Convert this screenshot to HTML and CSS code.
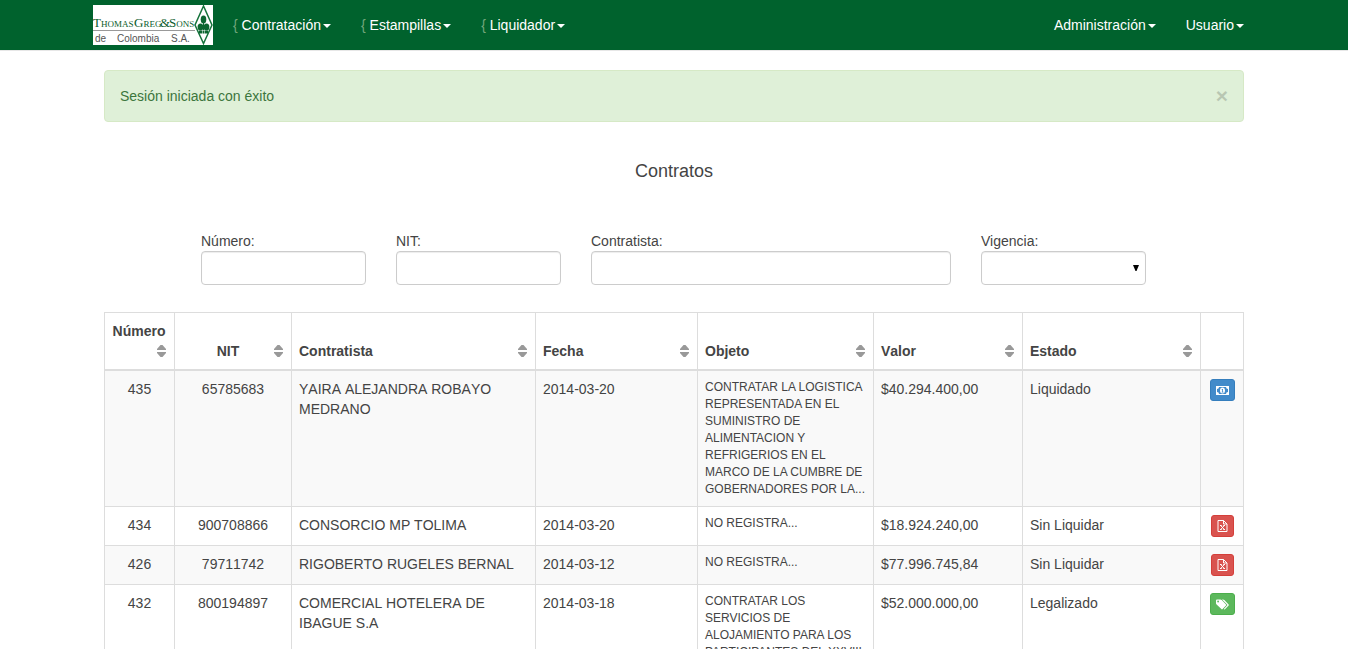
FILE: index.html
```html
<!DOCTYPE html>
<html lang="es">
<head>
<meta charset="utf-8">
<title>Contratos</title>
<meta name="viewport" content="width=device-width, initial-scale=1">
<link rel="stylesheet" href="styles.css">
</head>
<body>
<svg class="sprite" aria-hidden="true">
  <symbol id="sort" viewBox="0 0 9 12"><path d="M0 5V4L3.500 0h2L9 4v1zM0 7h9v1l-3.500 4h-2L0 8z"/></symbol>
  <symbol id="money" viewBox="0 0 13 9"><path fill-rule="evenodd" d="M0 0h13v9H0zM3 1Q3 3 1 3v3q2 0 2 2h7q0-2 2-2V3q-2 0-2-2z"/><path fill-rule="evenodd" d="M6.500 1.500c1.700 0 2.500 1.300 2.500 3s-.8 3-2.500 3S4 6.200 4 4.500s.8-3 2.500-3zM5.700 3v.8H6.200v2h-.5v.6h1.800v-.6H7V3z"/></symbol>
  <symbol id="file" viewBox="0 0 11 12"><path fill="none" stroke="currentColor" d="M1 .5h5.500L10 4v7.500H1zM6.500.5V4H10"/><path fill="none" stroke="currentColor" d="M3.700 5.500l3.600 4M7.300 5.500l-3.600 4M3 5.500h1.700M6.300 5.500H8M3 9.500h1.700M6.300 9.500H8"/></symbol>
  <symbol id="tags" viewBox="0 0 13 11"><path fill-rule="evenodd" d="M0 1.500Q0 .5 1 .5h3.300q.8 0 1.400.6l4.300 4.300q.6.600 0 1.200l-3.400 3.500q-.6.600-1.200 0L.6 5.600Q0 5 0 4.200zM2.100 1.600a.9.9 0 1 0 0 1.800.9.9 0 0 0 0-1.800z"/><path d="M6 .5h1q.8 0 1.400.6l4.200 4.300q.6.600 0 1.200l-3.400 3.500q-.6.600-1.200.1l-.2-.3 3.200-3.300q.6-.6 0-1.200z"/></symbol>
</svg>

<header class="navbar">
  <div class="container navbar-inner">
    <a class="brand" href="#" aria-label="Thomas Greg &amp; Sons de Colombia S.A.">
      <svg class="logo" viewBox="0 0 120 40">
        <g class="logo-name">
          <text x="0" y="22">T<tspan class="cap">HOMAS</tspan></text>
          <text x="41" y="22">G<tspan class="cap">REG</tspan></text>
          <text x="67" y="22">&amp;</text>
          <text x="76" y="22">S<tspan class="cap">ONS</tspan></text>
        </g>
        <path d="M0 25.500h102" stroke="#999"/>
        <g class="logo-place">
          <text x="2" y="37">de</text>
          <text x="24" y="37">Colombia</text>
          <text x="78" y="37">S.A.</text>
        </g>
        <path d="M110.500 1 102 20l8.500 18.500L119 20z" fill="#fff" stroke="#15733b" stroke-width="1.500"/>
        <g fill="#0b6630"><ellipse cx="110.500" cy="14.500" rx="2.800" ry="4"/><ellipse cx="107.500" cy="22" rx="2.900" ry="3.500"/><ellipse cx="113.500" cy="22" rx="2.900" ry="3.500"/><path d="M110 17h1v8h-1zM106 25.500h3v3h-3zM109.500 25.500h2v3h-2zM112 25.500h3v3h-3z"/></g>
      </svg>
    </a>
    <nav class="menu">
      <a href="#"><span class="brace">{</span> Contratación<b class="caret"></b></a>
      <a href="#"><span class="brace">{</span> Estampillas<b class="caret"></b></a>
      <a href="#"><span class="brace">{</span> Liquidador<b class="caret"></b></a>
    </nav>
    <nav class="menu menu-right">
      <a href="#">Administración<b class="caret"></b></a>
      <a href="#">Usuario<b class="caret"></b></a>
    </nav>
  </div>
</header>

<main class="container content">
  <div class="alert" role="status">
    <span>Sesión iniciada con éxito</span>
    <button class="close" type="button" aria-label="Cerrar">×</button>
  </div>

  <h1 class="title">Contratos</h1>

  <form class="filters">
    <div class="field"><label for="numero">Número:</label><input id="numero" type="text"></div>
    <div class="field"><label for="nit">NIT:</label><input id="nit" type="text"></div>
    <div class="field"><label for="contratista">Contratista:</label><input id="contratista" type="text"></div>
    <div class="field"><label for="vigencia">Vigencia:</label>
      <div class="select"><select id="vigencia"><option></option></select><svg class="arrow" viewBox="0 0 6 6" aria-hidden="true"><path d="M0 0h6L3.500 6h-1z"/></svg></div>
    </div>
  </form>

  <table class="contracts">
    <colgroup><col class="c-num"><col class="c-nit"><col class="c-name"><col class="c-date"><col class="c-object"><col class="c-value"><col class="c-state"><col class="c-action"></colgroup>
    <thead>
      <tr>
        <th class="center"><div class="head"><span>Número</span><svg class="sort"><use href="#sort"/></svg></div></th>
        <th class="center"><div class="head"><span>NIT</span><svg class="sort"><use href="#sort"/></svg></div></th>
        <th><div class="head"><span>Contratista</span><svg class="sort"><use href="#sort"/></svg></div></th>
        <th><div class="head"><span>Fecha</span><svg class="sort"><use href="#sort"/></svg></div></th>
        <th><div class="head"><span>Objeto</span><svg class="sort"><use href="#sort"/></svg></div></th>
        <th><div class="head"><span>Valor</span><svg class="sort"><use href="#sort"/></svg></div></th>
        <th><div class="head"><span>Estado</span><svg class="sort"><use href="#sort"/></svg></div></th>
        <th></th>
      </tr>
    </thead>
    <tbody>
      <tr>
        <td class="center">435</td><td class="center">65785683</td><td>YAIRA ALEJANDRA ROBAYO MEDRANO</td><td>2014-03-20</td>
        <td class="object">CONTRATAR LA LOGISTICA REPRESENTADA EN EL SUMINISTRO DE ALIMENTACION Y REFRIGERIOS EN EL MARCO DE LA CUMBRE DE GOBERNADORES POR LA...</td>
        <td>$40.294.400,00</td><td>Liquidado</td>
        <td class="center"><button class="btn btn-blue" type="button" aria-label="Ver pago"><svg width="13" height="9"><use href="#money"/></svg></button></td>
      </tr>
      <tr>
        <td class="center">434</td><td class="center">900708866</td><td>CONSORCIO MP TOLIMA</td><td>2014-03-20</td>
        <td class="object">NO REGISTRA...</td><td>$18.924.240,00</td><td>Sin Liquidar</td>
        <td class="center"><button class="btn btn-red" type="button" aria-label="Liquidar"><svg width="11" height="12"><use href="#file"/></svg></button></td>
      </tr>
      <tr>
        <td class="center">426</td><td class="center">79711742</td><td>RIGOBERTO RUGELES BERNAL</td><td>2014-03-12</td>
        <td class="object">NO REGISTRA...</td><td>$77.996.745,84</td><td>Sin Liquidar</td>
        <td class="center"><button class="btn btn-red" type="button" aria-label="Liquidar"><svg width="11" height="12"><use href="#file"/></svg></button></td>
      </tr>
      <tr>
        <td class="center">432</td><td class="center">800194897</td><td>COMERCIAL HOTELERA DE IBAGUE S.A</td><td>2014-03-18</td>
        <td class="object">CONTRATAR LOS SERVICIOS DE ALOJAMIENTO PARA LOS PARTICIPANTES DEL XXVIII</td><td>$52.000.000,00</td><td>Legalizado</td>
        <td class="center"><button class="btn btn-green" type="button" aria-label="Ver estampillas"><svg width="13" height="11"><use href="#tags"/></svg></button></td>
      </tr>
    </tbody>
  </table>
</main>
</body>
</html>
```
FILE: styles.css
```css
* { box-sizing: border-box; }
body {
  margin: 0;
  height: 100vh;
  overflow: auto;
  scrollbar-width: none;
  background: #fff;
  color: #444;
  font: 14px/20px "Liberation Sans", Arial, sans-serif;
}
.sprite { position: absolute; width: 0; height: 0; }
.container { max-width: 1170px; margin: 0 auto; }

.navbar { background: #00622d; border-bottom: 1px solid #e7e7e7; }
.navbar-inner { display: flex; align-items: center; min-height: 50px; }
.brand { margin: 0 5px 0 4px; }
.logo { display: block; width: 120px; height: 40px; background: #fff; }
.logo-name { font: 13px "Liberation Serif", serif; fill: #0b5c2c; }
.logo-name .cap { font-size: 9px; }
.logo-place { font: 10px "Liberation Sans", sans-serif; fill: #555; }
.menu { display: flex; }
.menu-right { margin-left: auto; }
.menu a { padding: 15px; color: #fff; text-decoration: none; white-space: nowrap; }
.brace { color: #72a67c; }
.caret {
  display: inline-block;
  margin-left: 2px;
  border: 4px solid transparent;
  border-top-color: #fff;
  border-bottom: 0;
  vertical-align: middle;
}

.content { padding: 19px 15px 20px; }
.alert {
  display: flex;
  justify-content: space-between;
  align-items: center;
  padding: 15px;
  border: 1px solid #d6e9c6;
  border-radius: 4px;
  background: #dff0d8;
  color: #3c763d;
}
.close {
  padding: 0;
  border: 0;
  background: none;
  color: #000;
  font: bold 21px/20px "Liberation Sans", Arial, sans-serif;
  opacity: .17;
}
.title { margin: 39px 0 50px; font-size: 18px; line-height: 20px; font-weight: 400; text-align: center; }

.filters {
  display: grid;
  grid-template-columns: 2fr 2fr 4fr 2fr;
  margin: 0 83px 27px 82px;
}
.field { padding: 0 15px; }
.field label { display: block; }
.field input, .field select {
  display: block;
  width: 100%;
  height: 34px;
  padding: 6px 12px;
  border: 1px solid #ccc;
  border-radius: 4px;
  background: #fff;
  box-shadow: inset 0 1px 1px rgba(0, 0, 0, .075);
  color: #555;
  font: inherit;
  appearance: none;
}
.select { position: relative; }
.arrow { position: absolute; right: 7px; top: 14px; width: 6px; height: 6px; pointer-events: none; }

.contracts { width: 100%; table-layout: fixed; border-collapse: collapse; font-kerning: none; }
.c-num { width: 70px; }
.c-nit { width: 117px; }
.c-name { width: 244px; }
.c-date { width: 162px; }
.c-object { width: 176px; }
.c-value { width: 149px; }
.c-state { width: 178px; }
.c-action { width: 43px; }
.contracts th, .contracts td { padding: 8px 7px; border: 1px solid #ddd; text-align: left; vertical-align: top; }
.contracts th { border-bottom-width: 2px; vertical-align: bottom; }
.contracts .center { text-align: center; }
.contracts tbody tr:nth-child(odd) { background: #f9f9f9; }
.contracts .object { font-size: 12px; line-height: 17px; font-kerning: normal; }
.head { display: flex; flex-wrap: wrap; justify-content: flex-end; align-items: center; padding-right: 1px; }
.head span { flex: 1 0 auto; }
.sort { width: 9px; height: 12px; margin: 4px 0; fill: #999; }

.btn {
  display: inline-flex;
  align-items: center;
  height: 22px;
  padding: 0 5px;
  border: 1px solid;
  border-radius: 3px;
  color: #fff;
  vertical-align: top;
}
.btn svg { fill: currentColor; }
.btn-blue { background: #428bca; border-color: #357ebd; }
.btn-red { background: #d9534f; border-color: #d43f3a; }
.btn-green { background: #5cb85c; border-color: #4cae4c; }
```
